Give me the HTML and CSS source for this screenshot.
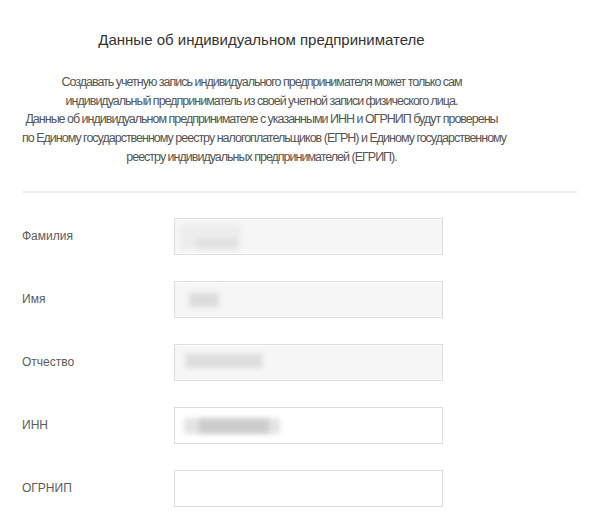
FILE: index.html
```html
<!DOCTYPE html>
<html lang="ru">

<head>
  <meta charset="UTF-8">
  <meta name="viewport" content="width=device-width, initial-scale=1.0">
  <title>Данные об индивидуальном предпринимателе</title>
  <link rel="stylesheet" href="styles.css">
</head>

<body>
  <div class="page">
    <div class="head">
      <h1 class="title">Данные об индивидуальном предпринимателе</h1>
      <p class="info">
        Создавать учетную запись индивидуального предпринимателя может только сам<br>
        индивидуальный предприниматель из своей учетной записи физического лица.<br>
        Данные об индивидуальном предпринимателе с указанными ИНН и ОГРНИП будут проверены<br>
        по Единому государственному реестру налогоплательщиков (ЕГРН) и Единому государственному<br>
        реестру индивидуальных предпринимателей (ЕГРИП).
      </p>
    </div>
    <div class="line"></div>

    <form class="form">
      <div class="row">
        <label class="label">Фамилия</label>
        <div class="field disabled">
          <span class="blur blur-a"></span>
          <span class="blur blur-a2"></span>
        </div>
      </div>
      <div class="row">
        <label class="label">Имя</label>
        <div class="field disabled">
          <span class="blur blur-b"></span>
        </div>
      </div>
      <div class="row">
        <label class="label">Отчество</label>
        <div class="field disabled">
          <span class="blur blur-c"></span>
        </div>
      </div>
      <div class="row">
        <label class="label">ИНН</label>
        <div class="field">
          <span class="blur blur-d"></span>
          <span class="blur blur-d2"></span>
        </div>
      </div>
      <div class="row">
        <label class="label">ОГРНИП</label>
        <div class="field"></div>
      </div>
    </form>
  </div>
</body>

</html>
```

FILE: styles.css
```css
* {
  margin: 0;
  padding: 0;
  box-sizing: border-box;
}

body {
  background-color: #fff;
  font-family: Arial, "Liberation Sans", sans-serif;
  color: #555;
}

.page {
  padding: 30px 23px 0 22px;
}

.head {
  width: 479px;
}

.title {
  font-size: 15px;
  font-weight: normal;
  color: #333;
  text-align: center;
  line-height: 20px;
}

.info {
  margin-top: 23px;
  font-size: 12.5px;
  letter-spacing: -1px;
  line-height: 18.7px;
  white-space: nowrap;
  text-align: center;
  color: #555;
}

.line {
  margin-top: 24px;
  height: 2px;
  background-color: #efefef;
}

.form {
  padding-top: 25px;
}

.row {
  display: flex;
  align-items: center;
  margin-bottom: 26px;
}

.label {
  width: 152px;
  font-size: 12px;
  color: #5c5c5c;
}

.field {
  position: relative;
  width: 269px;
  height: 37px;
  border: 1px solid #ddd;
  background-color: #fff;
}

.field.disabled {
  background-color: #f6f6f6;
  box-shadow: inset 0 1px 0 #fff, inset 0 -1px 0 #fff;
}

.blur {
  position: absolute;
  background-color: #d4d4d4;
  filter: blur(2.5px);
}

.blur-a {
  left: 6px;
  top: 6px;
  width: 60px;
  height: 24px;
  background-color: #ececec;
}

.blur-a2 {
  left: 22px;
  top: 20px;
  width: 40px;
  height: 9px;
  background-color: #e0e0e0;
}

.blur-b {
  left: 14px;
  top: 11px;
  width: 30px;
  height: 14px;
  background-color: #dcdcdc;
}

.blur-c {
  left: 10px;
  top: 9px;
  width: 78px;
  height: 14px;
  background-color: #dedede;
}

.blur-d {
  left: 9px;
  top: 10px;
  width: 96px;
  height: 16px;
  background-color: #e4e4e4;
}

.blur-d2 {
  left: 24px;
  top: 11px;
  width: 70px;
  height: 14px;
  background-color: #cdcdcd;
}
```
